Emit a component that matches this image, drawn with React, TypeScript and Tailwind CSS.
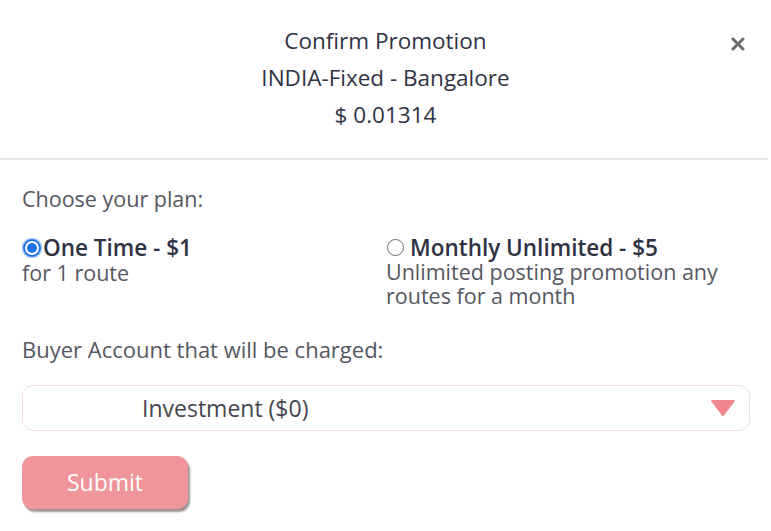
import React from "react";

export default function App() {
  const font = { fontFamily: '"Open Sans", "Noto Sans", sans-serif' };
  return (
    <div className="w-[771px] h-[531px] bg-white relative overflow-hidden" style={font}>
      <div className="flex flex-col items-center pt-[22px] text-[22.5px] leading-[37px] text-[#2f3243]">
        <div>Confirm Promotion</div>
        <div>INDIA-Fixed - Bangalore</div>
        <div>$ 0.01314</div>
      </div>
      <button className="absolute left-[730px] top-[36px] w-[16px] h-[16px] flex items-center justify-center">
        <svg width="14" height="14" viewBox="0 0 14 14">
          <path d="M2 2 L12 12 M12 2 L2 12" stroke="#6b6b70" strokeWidth="3" strokeLinecap="round" />
        </svg>
      </button>
      <div className="mt-[25px] h-[2px] bg-[#e6e6e8] w-[768px]" />
      <div className="px-[22px]">
        <div className="mt-[26px] text-[21.5px] text-[#55575f] leading-[26px]">Choose your plan:</div>
        <div className="mt-[23px] flex">
          <div className="w-[364px]">
            <div className="flex items-center h-[25px]">
              <span className="w-[18px] h-[18px] rounded-full border-[2px] border-[#1a73e8] shadow-[0_0_0_1.5px_#b9d5fb] flex items-center justify-center ml-[1px] mr-[2px] bg-white">
                <span className="w-[10px] h-[10px] rounded-full bg-[#1a73e8]" />
              </span>
              <span className="text-[22.5px] font-semibold text-[#2f3243] leading-[25px]">One Time - $1</span>
            </div>
            <div className="text-[21.5px] text-[#55575f] leading-[25px]">for 1 route</div>
          </div>
          <div>
            <div className="flex items-center h-[25px]">
              <span className="w-[17px] h-[17px] rounded-full border-[1.5px] border-[#6b6b70] ml-[1px] mr-[6px]" />
              <span className="text-[22.5px] font-semibold text-[#2f3243] leading-[25px]">Monthly Unlimited - $5</span>
            </div>
            <div className="text-[21.5px] text-[#55575f] leading-[24px] w-[360px]">Unlimited posting promotion any routes for a month</div>
          </div>
        </div>
        <div className="mt-[28px] text-[22px] text-[#55575f] leading-[26px]">Buyer Account that will be charged:</div>
        <div className="mt-[23px] h-[46px] w-[728px] border border-[#f3dfe2] rounded-[11px] flex items-center relative">
          <span className="ml-[119px] text-[23px] text-[#44464f]">Investment ($0)</span>
          <svg className="absolute left-[687px] top-[13px]" width="26" height="18" viewBox="0 0 26 18">
            <path d="M2 1 L24 1 Q25.5 1 24.6 2.4 L14 16.5 Q13 17.6 12 16.5 L1.4 2.4 Q0.5 1 2 1 Z" fill="#f0878f" />
          </svg>
        </div>
        <button className="mt-[25px] w-[166px] h-[53px] rounded-[11px] bg-[#f0959b] text-white text-[23px] shadow-[2px_3px_2px_rgba(80,60,60,0.55)] flex items-center justify-center">
          Submit
        </button>
      </div>
    </div>
  );
}
